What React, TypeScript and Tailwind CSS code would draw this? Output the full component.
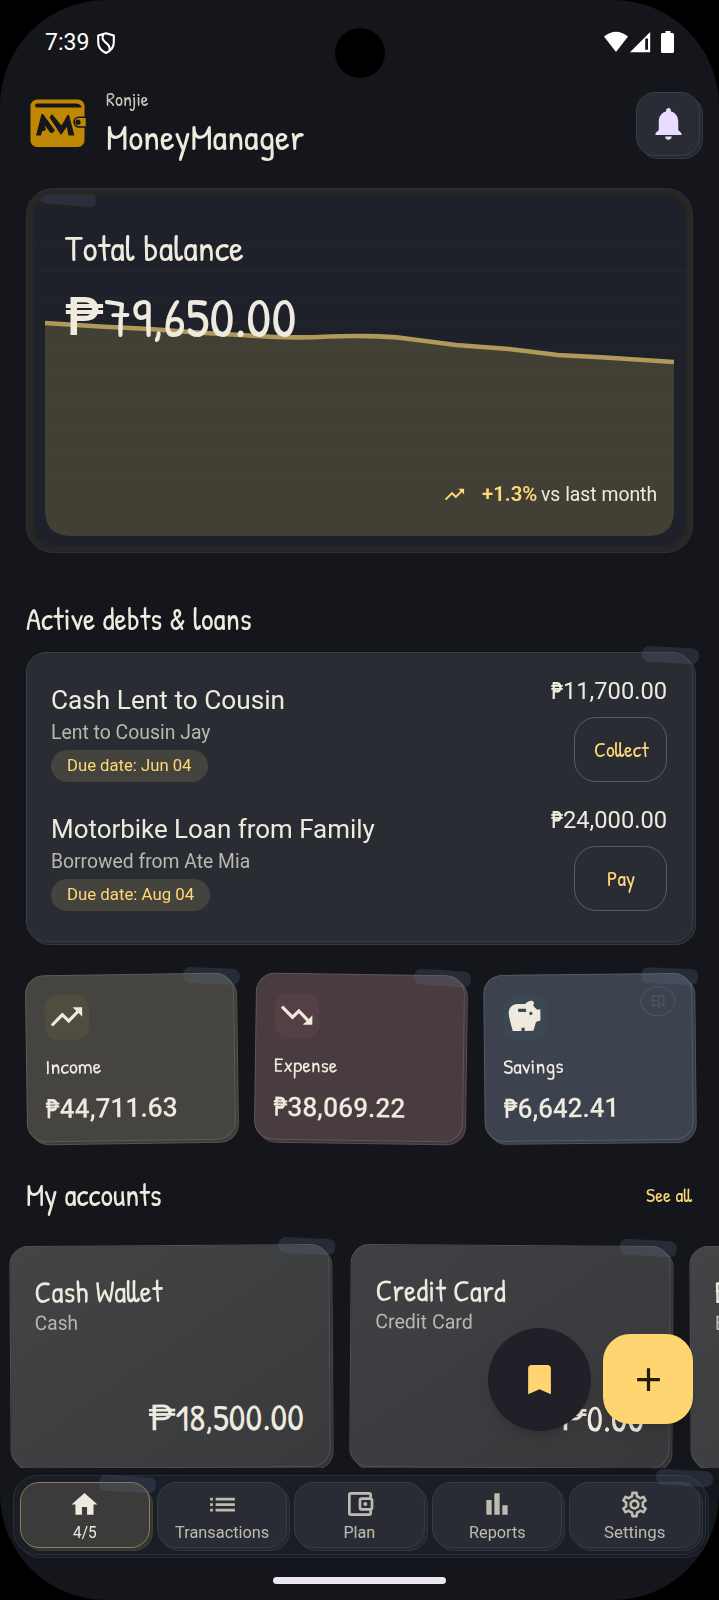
import React, { useLayoutEffect, useRef, useState } from "react";
import {
  MdAdd,
  MdBookmark,
  MdHome,
  MdList,
  MdNotifications,
  MdOutlineAccountBalanceWallet,
  MdOutlineSettings,
  MdSavings,
  MdTrendingDown,
  MdTrendingUp,
} from "react-icons/md";

interface FitProps {
  width: number;
  className?: string;
  children: React.ReactNode;
}

// Condenses a run of text so it fills exactly the given width
const Fit: React.FC<FitProps> = ({ width, className = "", children }) => {
  const ref = useRef<HTMLSpanElement>(null);
  const [scale, setScale] = useState(1);

  useLayoutEffect(() => {
    if (ref.current) setScale(width / ref.current.offsetWidth);
  }, [width]);

  return (
    <span className={`block shrink-0 whitespace-nowrap ${className}`} style={{ width }}>
      <span ref={ref} className="inline-block origin-left align-top" style={{ transform: `scaleX(${scale})` }}>
        {children}
      </span>
    </span>
  );
};

const Hand: React.FC<FitProps> = ({ width, className = "", children }) => (
  <Fit width={width} className={`font-['Patrick_Hand',Inter,sans-serif] ${className}`}>
    {children}
  </Fit>
);

interface MoneyProps {
  value: string;
  pesoWidth: number;
  width: number;
  className: string;
}

// The peso sign is set narrower and heavier than the digits
const Money: React.FC<MoneyProps> = ({ value, pesoWidth, width, className }) => (
  <div className={`flex ${className}`}>
    <Fit width={pesoWidth} className="font-semibold">₱</Fit>
    <Fit width={width}>{value}</Fit>
  </div>
);

const Tape = ({ className }: { className: string }) => (
  <span className={`absolute z-10 h-[16px] w-[57px] rotate-3 rounded-[7px] bg-[#5a6b85]/25 ${className}`} />
);

// Sheet of paper with a second one peeking out below and to the right
interface SheetProps {
  className: string;
  paper: string;
  under?: string;
  children: React.ReactNode;
}

const Sheet: React.FC<SheetProps> = ({ className, paper, under = paper, children }) => (
  <div className={`relative isolate ${className}`}>
    <div className={`absolute inset-0 -z-10 translate-x-[3px] translate-y-[3px] border brightness-90 ${under}`} />
    <div className={`absolute inset-0 -z-10 border ${paper}`} />
    {children}
  </div>
);

const ShieldIcon = () => (
  <svg width="18" height="22" viewBox="0 0 18 22" fill="none" stroke="#fff" strokeWidth="2.1" strokeLinejoin="round">
    <path d="M9 1.2 16.8 3.6V10.5C16.8 15.5 13.5 19 9 21 4.5 19 1.2 15.5 1.2 10.5V3.6Z" />
    <path d="M6.3 2.3C4.7 5.5 5.3 8 8.5 10.4S13.5 15 12.5 18.7" />
  </svg>
);

const LogoIcon = () => (
  <svg width="58" height="49" viewBox="0 0 58 49">
    <rect x="0.5" y="0.5" width="54" height="47.5" rx="6.5" fill="#c08703" />
    <path d="M5 6.2Q5 4.500 7 4.500H46Q50 4.500 52 8.500H8Q5 8.500 5 6.200Z" fill="#16171c" />
    <path d="M6 36.5 11.5 15 13 15 25 31.5 22.5 34 20.5 34 14.5 26 16 31 12 32.5 11 36.5Z" fill="#16171c" />
    <path d="M22 15 31.500 26.500 37.500 16H39L44.500 36.500H38.500L36.800 28 31 36 19.500 18.500Z" fill="#16171c" />
    <path d="M49 18.2H56.5V28H49A4.9 4.9 0 0 1 49 18.2Z" fill="#c08703" stroke="#16171c" strokeWidth="1.6" />
    <circle cx="48" cy="23.2" r="2.6" fill="#16171c" />
  </svg>
);

const BarsIcon = () => (
  <svg width="32" height="32" viewBox="0 0 24 24" fill="currentColor">
    <path d="M4 9h4v11H4zM16 13h4v7h-4zM10 4h4v16h-4z" />
  </svg>
);

const StatusBar = () => (
  <div className="flex h-[86px] items-center pr-[45px] pl-[45px] text-white">
    <span className="text-[23px] leading-7">7:39</span>
    <div className="ml-[8px]">
      <ShieldIcon />
    </div>
    <svg className="mb-[2px] ml-auto" width="70" height="22" viewBox="0 0 70 22" fill="#fff">
      <path d="M0 5.5Q12 -4.2 24 5.5L12 21Z" />
      <path fillRule="evenodd" d="M46.2 1V21.2H26ZM41.2 7.5H44V18.8H41.2Z" />
      <path d="M61.5 0H66.5V2H68.5Q70 2 70 3.5V20.5Q70 22 68.5 22H58.5Q57 22 57 20.5V3.5Q57 2 58.5 2H61.5Z" />
    </svg>
  </div>
);

const Header = () => (
  <header className="flex h-[74px] items-center pr-[19px] pl-[30px]">
    <LogoIcon />
    <div className="ml-[18px] flex flex-col gap-[6px] pb-[2px]">
      <Hand width={42.5} className="text-[19px] leading-[23px] text-[#c9c6ba]">Ronjie</Hand>
      <Hand width={198} className="text-[37px] leading-[39px]">MoneyManager</Hand>
    </div>
    <Sheet
      className="mt-px mr-0 ml-auto flex size-16 items-center justify-center"
      paper="rounded-[19px] border-[#3c3e46] bg-[#2a2c35]"
    >
      <MdNotifications size={39} color="#e9ddff" />
    </Sheet>
  </header>
);

const RULES = [57.5, 83, 109, 134, 160, 186, 211.5, 237, 263, 289];

const BalanceCard = () => (
  <section className="relative isolate mx-[26px] mt-7 flex h-[365px] flex-col overflow-hidden rounded-[27px] border border-[#2f3034] bg-[#282725] pt-[39px] pr-[35px] pb-[46px] pl-[38px]">
    <div className="absolute inset-[6px] -z-10 rounded-[21px] bg-[#1e2129] blur-[1px]" />
    <svg className="absolute top-0 left-0 -z-10" width="665" height="363" viewBox="27 189 665 363">
      <path d="M40 200Q44 194 52 194.5H93Q96 195 96 199V202Q95 207.5 90 207L46 203.5Q41 203 40 200Z" fill="#2a303b" />
      <path
        d="M45 323 100 326.5 150 329 205 333 250 335.5C280 338 310 337.5 330 336.5S385 336 404 338.2L456 345 509 349 558 355 605 357.5 674 362V510Q674 536 648 536H71Q45 536 45 510Z"
        fill="#424034"
      />
      <path
        d="M45 323 100 326.5 150 329 205 333 250 335.5C280 338 310 337.5 330 336.5S385 336 404 338.2L456 345 509 349 558 355 605 357.5 674 362"
        fill="none"
        stroke="#b0995a"
        strokeWidth="4.6"
      />
      {RULES.map((y) => (
        <path key={y} d={`M33 ${y + 188.5}H688`} stroke="#9d9d95" strokeOpacity="0.045" strokeWidth="1.5" />
      ))}
    </svg>
    <Hand width={179} className="text-[36px] leading-[40px]">Total balance</Hand>
    <div className="mt-[19px] flex text-[55px] leading-[60px]">
      <Fit width={39} className="text-[54px] font-medium">₱</Fit>
      <Hand width={192}>79,650.00</Hand>
    </div>
    <div className="mt-auto flex items-center self-end text-[20px] leading-6">
      <MdTrendingUp size={23} color="#ffd776" />
      <span className="ml-[16px] font-semibold text-[#ffd776]">
        <Fit width={55}>+1.3%</Fit>
      </span>
      <Fit width={116} className="ml-[4px]">vs last month</Fit>
    </div>
  </section>
);

interface Debt {
  title: string;
  titleWidth: number;
  person: string;
  personWidth: number;
  due: string;
  dueWidth: number;
  amount: string;
  action: string;
  actionWidth: number;
}

const DEBTS: Debt[] = [
  {
    title: "Cash Lent to Cousin",
    titleWidth: 234,
    person: "Lent to Cousin Jay",
    personWidth: 160,
    due: "Due date: Jun 04",
    dueWidth: 125,
    amount: "11,700.00",
    action: "Collect",
    actionWidth: 55,
  },
  {
    title: "Motorbike Loan from Family",
    titleWidth: 324,
    person: "Borrowed from Ate Mia",
    personWidth: 199,
    due: "Due date: Aug 04",
    dueWidth: 127,
    amount: "24,000.00",
    action: "Pay",
    actionWidth: 28,
  },
];

const DebtRow = ({ debt }: { debt: Debt }) => (
  <div className="flex h-[129px] justify-between pr-[26px] pl-[25px]">
    <div className="pt-[15px]">
      <Fit width={debt.titleWidth} className="text-[26px] leading-8">{debt.title}</Fit>
      <Fit width={debt.personWidth} className="mt-[3px] text-[20px] leading-[26px] text-[#b9b7ae]">{debt.person}</Fit>
      <div className="mt-[5px] flex h-[32px] w-fit items-center rounded-full bg-[#45433d] px-4 text-[16px] leading-5 text-[#ffd776]">
        <Fit width={debt.dueWidth}>{debt.due}</Fit>
      </div>
    </div>
    <div className="flex flex-col items-end pt-[9px]">
      <Money value={debt.amount} pesoWidth={12} width={104} className="text-[23px] leading-7" />
      <button className="mt-[11px] flex h-[65px] w-[93px] items-center justify-center rounded-[22px] border-[1.5px] border-[#5a5c64] pt-px text-[#ffd776]">
        <Hand width={debt.actionWidth} className="text-[21px] leading-6">{debt.action}</Hand>
      </button>
    </div>
  </div>
);

interface Stat {
  label: string;
  labelWidth: number;
  amount: string;
  amountWidth: number;
  icon: React.ReactNode;
  tilt: string;
  paper: string;
  badge: string;
}

const STATS: Stat[] = [
  {
    label: "Income",
    labelWidth: 56,
    amount: "44,711.63",
    amountWidth: 118,
    icon: <MdTrendingUp size={38} />,
    tilt: "-rotate-[0.8deg]",
    paper: "rounded-[19px] border-[#5d5c58] bg-[#454440]",
    badge: "bg-[#4f4d3f]",
  },
  {
    label: "Expense",
    labelWidth: 64,
    amount: "38,069.22",
    amountWidth: 118,
    icon: <MdTrendingDown size={38} />,
    tilt: "rotate-[0.8deg]",
    paper: "rounded-[19px] border-[#62555a] bg-[#483c41]",
    badge: "bg-[#543f45]",
  },
  {
    label: "Savings",
    labelWidth: 61,
    amount: "6,642.41",
    amountWidth: 102,
    icon: <MdSavings size={38} />,
    tilt: "-rotate-[0.6deg]",
    paper: "rounded-[19px] border-[#545c68] bg-[#3d434e]",
    badge: "bg-[#3b4753]",
  },
];

const StatCard = ({ stat }: { stat: Stat }) => (
  <Sheet className={`h-[167px] px-[18.5px] pt-[19.5px] ${stat.tilt}`} paper={stat.paper}>
    <Tape className="-top-[5px] right-[-6px]" />
    <div className={`flex size-[45px] items-center justify-center rounded-[14px] ${stat.badge}`}>{stat.icon}</div>
    <Hand width={stat.labelWidth} className="mt-[15.5px] text-[20.5px] leading-6">{stat.label}</Hand>
    <Money
      value={stat.amount}
      pesoWidth={14}
      width={stat.amountWidth}
      className="mt-[13.5px] text-[27px] leading-8 font-medium"
    />
    {stat.label === "Savings" && (
      <span className="absolute top-[13px] right-[17px] flex h-[30px] w-[35px] items-center justify-center rounded-[50%] border-[1.5px] border-[#4d5763] font-['Noto_Sans_CJK_JP',sans-serif] text-[15px] text-[#4d5763]">
        印
      </span>
    )}
  </Sheet>
);

interface Account {
  name: string;
  nameWidth: number;
  kind: string;
  kindWidth: number;
  amount: string;
  amountWidth: number;
  tilt: string;
  paper: string;
}

const ACCOUNTS: Account[] = [
  {
    name: "Cash Wallet",
    nameWidth: 128,
    kind: "Cash",
    kindWidth: 43,
    amount: "18,500.00",
    amountWidth: 129,
    tilt: "-rotate-[0.4deg]",
    paper: "rounded-[19px] border-[#505153] bg-linear-to-br from-[#434445] to-[#383a3b]",
  },
  {
    name: "Credit Card",
    nameWidth: 130,
    kind: "Credit Card",
    kindWidth: 98,
    amount: "0.00",
    amountWidth: 57,
    tilt: "rotate-[0.4deg]",
    paper: "rounded-[19px] border-[#4f5053] bg-linear-to-br from-[#404144] to-[#38383b]",
  },
  {
    name: "E-Wallet",
    nameWidth: 96,
    kind: "E-Wallet",
    kindWidth: 76,
    amount: "0.00",
    amountWidth: 57,
    tilt: "-rotate-[0.4deg]",
    paper: "rounded-[19px] border-[#505153] bg-linear-to-br from-[#434445] to-[#383a3b]",
  },
];

const AccountCard = ({ account }: { account: Account }) => (
  <Sheet
    className={`flex h-[223px] w-[320px] shrink-0 flex-col pt-[28px] pr-[26px] pb-[29px] pl-[25px] ${account.tilt}`}
    paper={account.paper}
  >
    <Tape className="-top-[6px] right-[-6px]" />
    <Hand width={account.nameWidth} className="text-[31.5px] leading-[35px]">{account.name}</Hand>
    <Fit width={account.kindWidth} className="mt-px text-[20px] leading-[26px] text-[#b9b7ae]">{account.kind}</Fit>
    <div className="mt-auto flex self-end text-[37.5px] leading-[42px]">
      <Fit width={27} className="text-[36px]">₱</Fit>
      <Hand width={account.amountWidth}>{account.amount}</Hand>
    </div>
  </Sheet>
);

const TABS = [
  { label: "4/5", width: 24, icon: <MdHome size={31} />, active: true },
  { label: "Transactions", width: 94, icon: <MdList size={33} />, active: false },
  { label: "Plan", width: 32, icon: <MdOutlineAccountBalanceWallet size={32} />, active: false },
  { label: "Reports", width: 57, icon: <BarsIcon />, active: false },
  { label: "Settings", width: 61, icon: <MdOutlineSettings size={31} />, active: false },
];

const TabBar = () => (
  <Sheet
    className="mx-[13px] mt-[7px] flex h-[80px] gap-[7.4px] pt-[7px] pr-[6.5px] pl-[6.5px]"
    paper="rounded-[24px] border-[#2a303b] bg-[#1a1e27]"
  >
    <Tape className="top-[1px] left-[86px]" />
    <Tape className="-top-[5px] right-[-7px]" />
    {TABS.map((tab) => (
      <Sheet
        key={tab.label}
        className={`flex h-[66px] flex-1 flex-col items-center pt-[6px] ${tab.active ? "text-[#eeeade]" : "text-[#bfbbb0]"}`}
        paper={
          tab.active
            ? "rounded-[19px] border-[1.5px] border-[#8f7f4f] bg-[#3c3b3b]"
            : "rounded-[19px] border-[#373a44] bg-[#2a2c35]"
        }
        under={tab.active ? "rounded-[19px] border-[#45443f] bg-[#3c3b3b]" : "rounded-[19px] border-[#373a44] bg-[#2a2c35]"}
      >
        <div className="flex h-8 items-center">{tab.icon}</div>
        <Fit width={tab.width} className="mt-[3px] text-[16px] leading-5">{tab.label}</Fit>
      </Sheet>
    ))}
  </Sheet>
);

function App() {
  return (
    <div className="h-[1600px] w-[719px] overflow-hidden bg-black">
      <div className="relative h-[1600px] overflow-hidden rounded-[106px] bg-[#15161b] font-[Roboto,sans-serif] text-[#eeeade]">
        <div className="absolute top-[28px] left-[334.5px] size-[50px] rounded-full bg-black" />
        <StatusBar />
        <Header />
        <BalanceCard />

        <Hand width={226} className="mt-[48px] ml-[26px] text-[31.5px] leading-[36px]">Active debts &amp; loans</Hand>
        <Sheet
          className="mx-[26px] mt-[15px] h-[290px] pt-[17px]"
          paper="rounded-[20px] border-[#3b3d45] bg-[#2a2c34]"
        >
          <Tape className="-top-[5px] right-[-6px]" />
          {DEBTS.map((debt) => (
            <DebtRow key={debt.title} debt={debt} />
          ))}
        </Sheet>

        <div className="mx-[26px] mt-[32px] grid grid-cols-3 gap-5">
          {STATS.map((stat) => (
            <StatCard key={stat.label} stat={stat} />
          ))}
        </div>

        <div className="mt-[36px] flex items-center justify-between pr-[27px] pl-[26px]">
          <Hand width={136} className="text-[31.5px] leading-[36px]">My accounts</Hand>
          <Hand width={46} className="text-[19.5px] leading-6 text-[#ffd776]">See all</Hand>
        </div>

        <div className="mt-3 flex h-[243px] gap-5 overflow-hidden pt-5 pl-[10px]">
          {ACCOUNTS.map((account) => (
            <AccountCard key={account.name} account={account} />
          ))}
        </div>

        <TabBar />
        <div className="mx-auto mt-[22px] h-[7px] w-[173px] rounded-full bg-[#ece7f0]" />

        {/* Floating actions */}
        <div className="absolute top-[1327.5px] right-[26px] z-20 flex items-center gap-[12px]">
          <button className="flex size-[103px] items-center justify-center rounded-full bg-[#211f27] shadow-lg">
            <MdBookmark size={39} color="#ffd572" />
          </button>
          <button className="flex size-[90px] items-center justify-center rounded-[27px] bg-[#ffd572] shadow-lg">
            <MdAdd size={39} color="#241a00" />
          </button>
        </div>
      </div>
    </div>
  );
}

export default App;
